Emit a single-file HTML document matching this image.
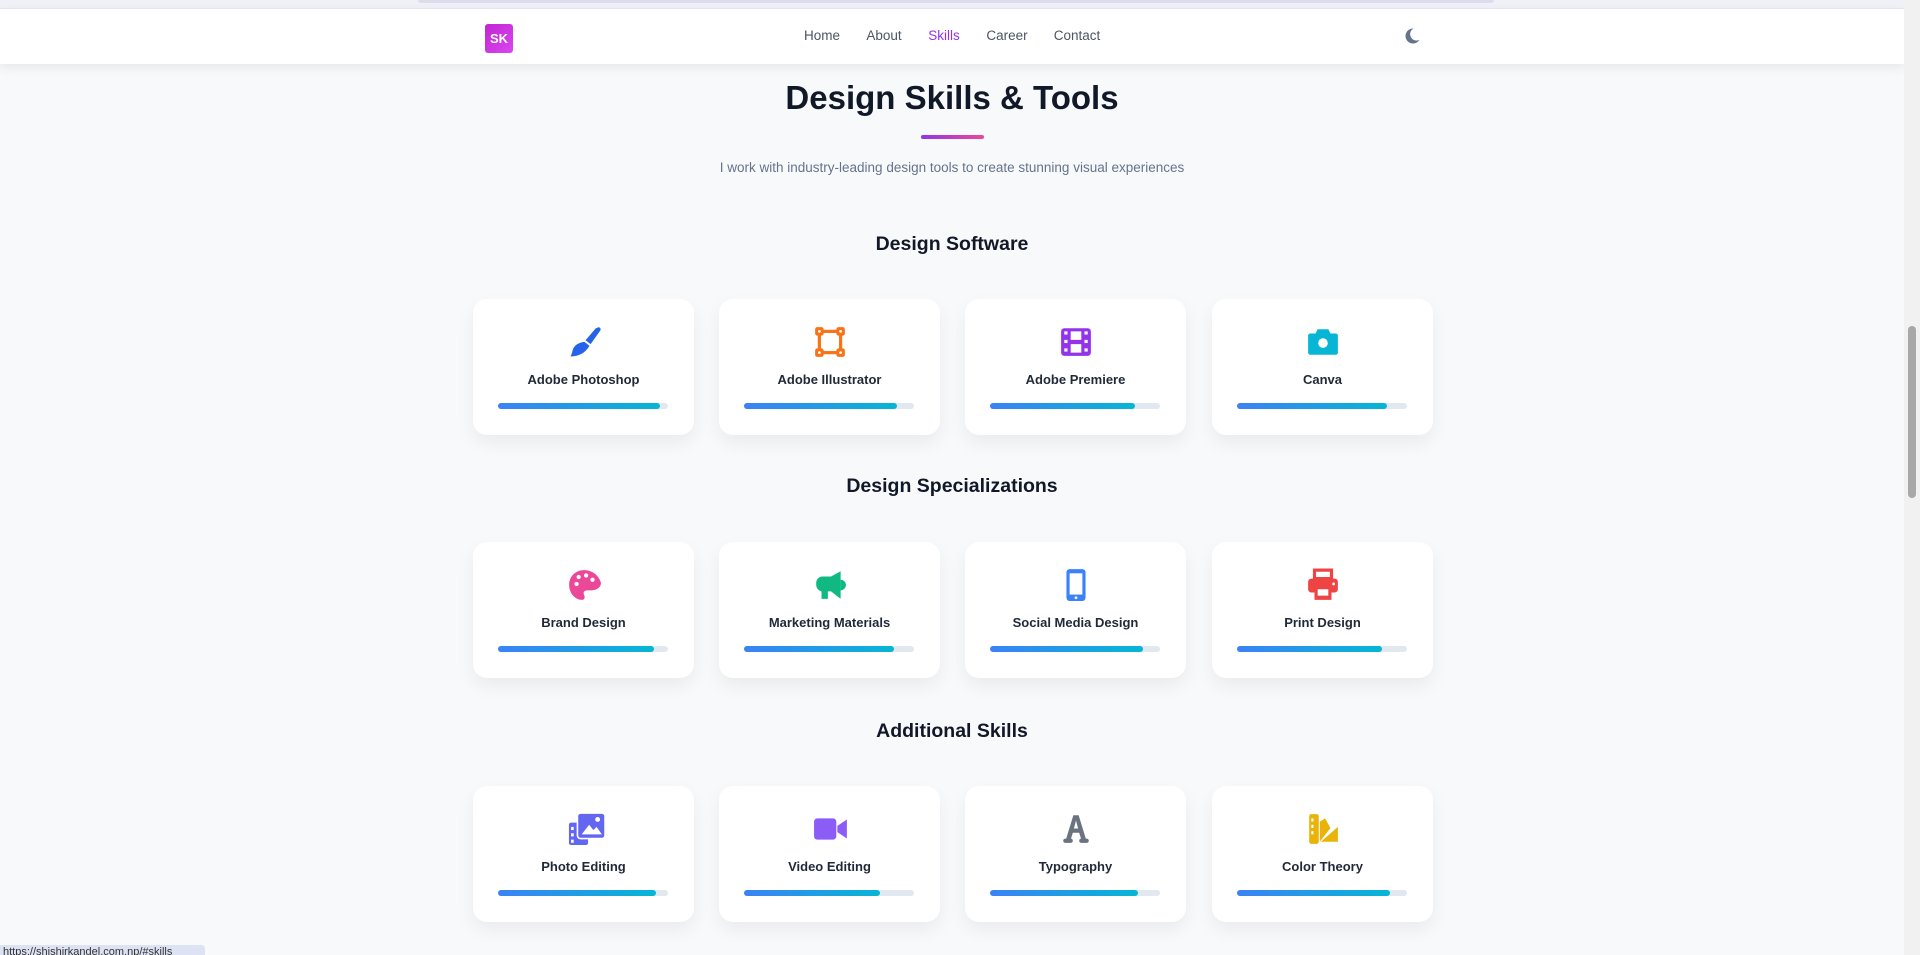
<!DOCTYPE html>
<html><head><meta charset="utf-8"><style>
*{box-sizing:border-box;margin:0;padding:0}
body{width:1920px;height:955px;overflow:hidden;background:#f8f9fb;font-family:"Liberation Sans",sans-serif;position:relative;color:#111827}
.top{position:absolute;left:0;top:0;width:1904px;height:8px;background:#f0f0f7}
.top .tab{position:absolute;left:418px;width:1076px;top:0;height:3px;background:#dcdcec;border-radius:0 0 6px 6px}
header{position:absolute;left:0;top:8px;width:1904px;height:56px;background:#fff;box-shadow:0 4px 10px rgba(0,0,0,.07);border-top:1px solid #e5e5f0}
.logo{position:absolute;left:485px;top:15px;width:28px;height:29px;border-radius:3px;background:linear-gradient(135deg,#c026d3,#d946ef);color:#fff;font-weight:700;font-size:13px;text-align:center;line-height:29px}
nav{position:absolute;top:19px;left:0;width:1904px;text-align:center;font-size:13.5px}
nav a{color:#4b5563;text-decoration:none;position:absolute;transform:translateX(-50%)}
.moon{position:absolute;left:1403px;top:18px}
h1{position:absolute;top:79px;width:1904px;text-align:center;font-size:33px;font-weight:700}
.line{position:absolute;left:921px;top:135px;width:63px;height:4px;border-radius:2px;background:linear-gradient(90deg,#9333ea,#ec4899)}
.sub{position:absolute;top:160px;width:1904px;text-align:center;font-size:13.5px;color:#64748b}
h2{position:absolute;width:1904px;text-align:center;font-size:19.5px;font-weight:700}
.card{position:absolute;width:221px;height:136px;background:#fff;border-radius:14px;box-shadow:0 8px 18px rgba(0,0,0,.06);text-align:center}
.card svg{position:absolute;left:94px;top:26px}
.card .t{position:absolute;top:73px;width:100%;font-size:13px;font-weight:700;color:#1f2937}
.bar{position:absolute;left:25px;top:104px;width:170px;height:6px;border-radius:3px;background:#e2e8f0}
.bar i{display:block;height:6px;border-radius:3px;background:linear-gradient(90deg,#3b82f6,#06b6d4)}
.sb{position:absolute;right:0;top:0;width:16px;height:955px;background:#f1f1f1}
.sb i{position:absolute;left:4px;top:326px;width:8px;height:172px;border-radius:4px;background:#a8a8a8}
.status{position:absolute;left:0;top:945px;width:205px;height:10px;background:#dde3f5;border-radius:0 4px 0 0;font-size:11px;color:#333;padding-left:3px;line-height:14px;overflow:hidden}
</style></head><body>
<div class="top"><div class="tab"></div></div>
<header>
<div class="logo">SK</div>
<nav><a style="left:822px">Home</a><a style="left:884px">About</a><a style="left:944px;color:#9333ea">Skills</a><a style="left:1007px">Career</a><a style="left:1077px">Contact</a></nav>
<svg class="moon" width="18" height="18" viewBox="0 0 24 24"><path d="M14 2A10 10 0 1 0 22 17 8.5 8.5 0 0 1 14 2z" fill="#64748b"/></svg>
</header>
<h1>Design Skills &amp; Tools</h1>
<div class="line"></div>
<div class="sub">I work with industry-leading design tools to create stunning visual experiences</div>

<h2 style="top:233px">Design Software</h2>
<h2 style="top:475px">Design Specializations</h2>
<h2 style="top:720px">Additional Skills</h2>

<!-- row1 -->
<div class="card" style="left:473px;top:299px"><svg width="36" height="36" viewBox="0 0 32 32"><path d="M28 2c1.5 0 2.5 1.5 1.5 3L21 17l-4.5-3.5 9-10.5z" fill="#2563eb"/><path d="M15.5 15l4.5 3.5-1 1.5C16.5 24 11 28 3 28c1.5-2 1.5-4.5 2.5-7 2-4 6-5.5 10-6z" fill="#2563eb"/></svg><div class="t">Adobe Photoshop</div><div class="bar"><i style="width:95%"></i></div></div>
<div class="card" style="left:719px;top:299px"><svg width="34" height="34" viewBox="0 0 32 32"><rect x="6" y="6" width="20" height="20" fill="none" stroke="#f97316" stroke-width="3"/><g fill="#f97316"><rect x="2" y="2" width="8" height="8" rx="2"/><rect x="22" y="2" width="8" height="8" rx="2"/><rect x="2" y="22" width="8" height="8" rx="2"/><rect x="22" y="22" width="8" height="8" rx="2"/></g><g fill="#fff"><circle cx="6" cy="6" r="1.3"/><circle cx="26" cy="6" r="1.3"/><circle cx="6" cy="26" r="1.3"/><circle cx="26" cy="26" r="1.3"/></g></svg><div class="t">Adobe Illustrator</div><div class="bar"><i style="width:90%"></i></div></div>
<div class="card" style="left:965px;top:299px"><svg width="34" height="34" viewBox="0 0 32 32"><rect x="2" y="3" width="28" height="26" rx="3" fill="#9333ea"/><g fill="#fff"><rect x="5" y="6" width="3" height="3"/><rect x="5" y="14" width="3" height="3"/><rect x="5" y="22" width="3" height="3"/><rect x="24" y="6" width="3" height="3"/><rect x="24" y="14" width="3" height="3"/><rect x="24" y="22" width="3" height="3"/><rect x="11" y="6" width="10" height="8"/><rect x="11" y="18" width="10" height="8"/></g></svg><div class="t">Adobe Premiere</div><div class="bar"><i style="width:85%"></i></div></div>
<div class="card" style="left:1212px;top:299px"><svg width="34" height="34" viewBox="0 0 32 32"><path d="M11 4h10l2 4h5a2 2 0 0 1 2 2v16a2 2 0 0 1-2 2H4a2 2 0 0 1-2-2V10a2 2 0 0 1 2-2h5z" fill="#06b6d4"/><circle cx="16" cy="17" r="4.5" fill="#fff"/></svg><div class="t">Canva</div><div class="bar"><i style="width:88%"></i></div></div>

<!-- row2 -->
<div class="card" style="left:473px;top:542px"><svg width="34" height="34" viewBox="0 0 32 32"><path d="M16 2C8 2 2 8 2 16s6 14 12 14c3 0 3-3 2-5-1-2 0-4 3-4h4c5 0 9-3 9-7C30 7 24 2 16 2z" fill="#ec4899"/><g fill="#fff"><circle cx="9" cy="15" r="2"/><circle cx="11" cy="8.5" r="2"/><circle cx="18" cy="7" r="2"/><circle cx="24" cy="11" r="2"/></g></svg><div class="t">Brand Design</div><div class="bar"><i style="width:92%"></i></div></div>
<div class="card" style="left:719px;top:542px"><svg width="34" height="34" viewBox="0 0 32 32"><path d="M26 3v26l-9-7h-3v7H8V22a6 6 0 0 1-5-6v-2a6 6 0 0 1 6-6h8z" fill="#10b981"/><path d="M26 12a4 4 0 0 1 0 8" fill="#10b981" stroke="#10b981" stroke-width="2"/></svg><div class="t">Marketing Materials</div><div class="bar"><i style="width:88%"></i></div></div>
<div class="card" style="left:965px;top:542px"><svg width="34" height="34" viewBox="0 0 32 32"><rect x="7" y="1" width="18" height="30" rx="3" fill="#3b82f6"/><rect x="10" y="5" width="12" height="20" fill="#fff"/><circle cx="16" cy="28" r="1.3" fill="#fff"/></svg><div class="t">Social Media Design</div><div class="bar"><i style="width:90%"></i></div></div>
<div class="card" style="left:1212px;top:542px"><svg width="34" height="34" viewBox="0 0 32 32"><path d="M8 2h16v8H8z" fill="none" stroke="#ef4444" stroke-width="3"/><rect x="2" y="10" width="28" height="13" rx="3" fill="#ef4444"/><rect x="8" y="19" width="16" height="11" fill="#ef4444"/><rect x="11" y="20" width="10" height="6" fill="#fff"/><circle cx="26" cy="15" r="1.3" fill="#fff"/></svg><div class="t">Print Design</div><div class="bar"><i style="width:85%"></i></div></div>

<!-- row3 -->
<div class="card" style="left:473px;top:786px"><svg width="40" height="34" viewBox="0 0 36 32"><rect x="1" y="10" width="18" height="21" rx="2" fill="#6366f1"/><g fill="#fff"><rect x="3" y="14" width="2.5" height="3"/><rect x="3" y="20" width="2.5" height="3"/><rect x="3" y="26" width="2.5" height="3"/></g><rect x="9" y="1" width="26" height="24" rx="3" fill="#6366f1" stroke="#fff" stroke-width="1.5"/><path d="M13 21l7-9 4 5 3-3 5 7z" fill="#fff"/><circle cx="28" cy="7" r="2.3" fill="#fff"/></svg><div class="t">Photo Editing</div><div class="bar"><i style="width:93%"></i></div></div>
<div class="card" style="left:719px;top:786px"><svg width="36" height="34" viewBox="0 0 34 32"><rect x="1" y="6" width="21" height="20" rx="3" fill="#8b5cf6"/><path d="M23 13l9-6v18l-9-6z" fill="#8b5cf6"/></svg><div class="t">Video Editing</div><div class="bar"><i style="width:80%"></i></div></div>
<div class="card" style="left:965px;top:786px"><svg width="34" height="34" viewBox="0 0 32 32"><path d="M13.5 3h5l7 23h-4.5l-2-6.5h-6L11 26H6.5zM14 15.5h4L16 8z" fill="#6b7280" fill-rule="evenodd"/><rect x="4" y="25" width="9" height="4" rx="2" fill="#6b7280"/><rect x="19" y="25" width="9" height="4" rx="2" fill="#6b7280"/></svg><div class="t">Typography</div><div class="bar"><i style="width:87%"></i></div></div>
<div class="card" style="left:1212px;top:786px"><svg width="34" height="34" viewBox="0 0 32 32"><rect x="3" y="2" width="9" height="28" rx="2" fill="#eab308"/><g fill="#fff"><rect x="5" y="6" width="2" height="3"/><rect x="5" y="12" width="2" height="3"/><rect x="5" y="18" width="2" height="3"/></g><path d="M13 9l5-3 5 9-10 13z" fill="#eab308"/><path d="M14 28l16-14v14z" fill="#eab308"/></svg><div class="t">Color Theory</div><div class="bar"><i style="width:90%"></i></div></div>

<div class="sb"><i></i></div>
<div class="status">https://shishirkandel.com.np/#skills</div>
</body></html>
